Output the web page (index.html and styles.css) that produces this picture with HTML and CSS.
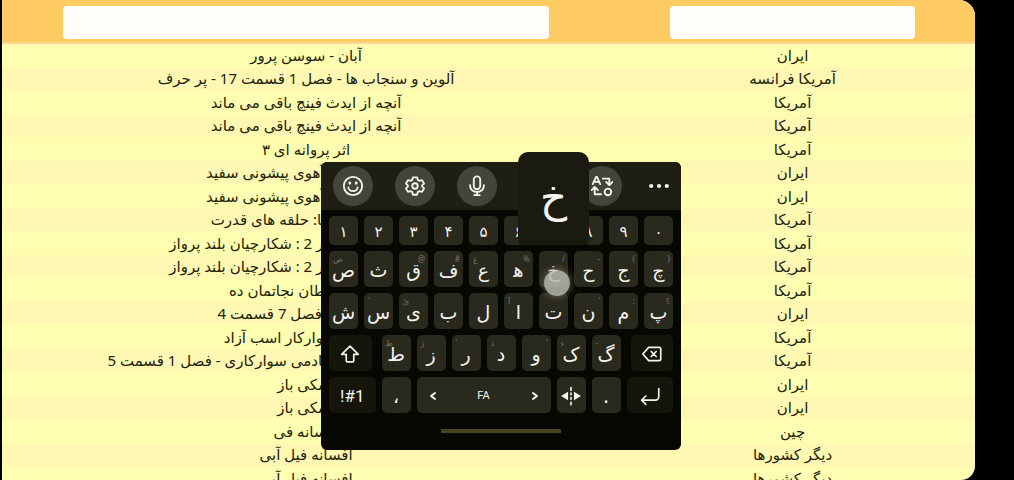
FILE: index.html
```html
<!DOCTYPE html>
<html lang="fa">
<head>
<meta charset="utf-8">
<meta name="viewport" content="width=device-width, initial-scale=1">
<title>فهرست فیلم ها</title>
<link rel="stylesheet" href="styles.css">
</head>
<body>
<main class="panel">
<table class="films" dir="rtl">
<colgroup><col class="col-country"><col class="col-title"></colgroup>
<thead>
<tr>
<th><input class="filter filter-country" type="text" aria-label="کشور"></th>
<th><input class="filter filter-title" type="text" aria-label="عنوان"></th>
</tr>
</thead>
<tbody>
<tr><td>ایران</td><td>آبان - سوسن پرور</td></tr>
<tr><td>آمریکا فرانسه</td><td>آلوین و سنجاب ها - فصل 1 قسمت 17 - پر حرف</td></tr>
<tr><td>آمریکا</td><td>آنچه از ایدث فینچ باقی می ماند</td></tr>
<tr><td>آمریکا</td><td>آنچه از ایدث فینچ باقی می ماند</td></tr>
<tr><td>آمریکا</td><td>اثر پروانه ای ۳</td></tr>
<tr><td>ایران</td><td>ماجراهای آن آهوی پیشونی سفید</td></tr>
<tr><td>ایران</td><td>ماجراهای آن آهوی پیشونی سفید</td></tr>
<tr><td>آمریکا</td><td>ارباب حلقه ها: حلقه های قدرت</td></tr>
<tr><td>آمریکا</td><td>ارتش پرندگان مهاجر 2 : شکارچیان بلند پرواز</td></tr>
<tr><td>آمریکا</td><td>ارتش پرندگان مهاجر 2 : شکارچیان بلند پرواز</td></tr>
<tr><td>آمریکا</td><td>از شر شیطان نجاتمان ده</td></tr>
<tr><td>ایران</td><td>سرنوشت - فصل 7 قسمت 4</td></tr>
<tr><td>آمریکا</td><td>اسپریت سوارکار اسب آزاد</td></tr>
<tr><td>آمریکا</td><td>اسب های وحشی و قهرمان آکادمی سوارکاری - فصل 1 قسمت 5</td></tr>
<tr><td>ایران</td><td>اسکی باز</td></tr>
<tr><td>ایران</td><td>اسکی باز</td></tr>
<tr><td>چین</td><td>افسانه فی</td></tr>
<tr><td>دیگر کشورها</td><td>افسانه فیل آبی</td></tr>
<tr><td>دیگر کشورها</td><td>افسانه فیل آبی</td></tr>
</tbody>
</table>
</main>

<section class="keyboard" aria-label="صفحه کلید">
<div class="toolbar">
<button class="tool" aria-label="شکلک"><svg viewBox="0 0 24 24"><circle cx="12" cy="12" r="10"/><path d="M7 13.500a5 4 0 0 0 10 0"/><path d="M8.500 8.500v.6M15.500 8.500v.6" class="heavy"/></svg></button>
<button class="tool" aria-label="تنظیمات"><svg viewBox="0 0 24 24"><path d="M9.800 2.500h4.400l.8 2.800 1.900 1.100 2.800-.8 2.200 3.800-2.100 2v1.200l2.100 2-2.200 3.800-2.800-.8-1.900 1.100-.8 2.800H9.800L9 18.700l-1.900-1.100-2.800.8-2.200-3.800 2.100-2v-1.200l-2.100-2 2.200-3.800 2.800.8L9 5.300z"/><circle cx="12" cy="12" r="3"/></svg></button>
<button class="tool" aria-label="گفتار"><svg viewBox="0 0 24 24"><rect x="8.500" y="1.500" width="7" height="14" rx="3.500"/><path d="M4.500 11v1a7.500 6.500 0 0 0 15 0v-1M12 18.500v3M9 22h6"/></svg></button>
<span class="tool-gap"></span>
<button class="tool" aria-label="ترجمه"><svg viewBox="0 0 24 24"><path d="M2 10l3.500-8h1L10 10M3.500 7.500h5M13 4h7v6M16.500 7.500L20 11l3.500-3.500M11 21H4v-7M.8 16.500L4 13l3.500 3.500"/><circle cx="18.500" cy="18.500" r="3.600"/></svg></button>
<button class="tool more" aria-label="بیشتر"><svg viewBox="0 0 24 24"><circle cx="3.500" cy="12" r="2.300"/><circle cx="12" cy="12" r="2.300"/><circle cx="20.500" cy="12" r="2.300"/></svg></button>
</div>
<div class="keys">
<div class="row digits">
<button class="key">۱</button><button class="key">۲</button><button class="key">۳</button><button class="key">۴</button><button class="key">۵</button><button class="key">۶</button><button class="key">۷</button><button class="key">۸</button><button class="key">۹</button><button class="key">۰</button>
</div>
<div class="row">
<button class="key"><small class="left">ض</small>ص</button><button class="key">ث</button><button class="key"><small>@</small>ق</button><button class="key"><small>#</small>ف</button><button class="key"><small class="left">غ</small>ع</button><button class="key"><small>%</small>ه&zwj;</button><button class="key"><small>/</small>خ<span class="touch"></span></button><button class="key"><small>-</small>ح</button><button class="key"><small>(</small>ج</button><button class="key"><small>)</small>چ</button>
</div>
<div class="row">
<button class="key">ش</button><button class="key"><small class="left">'</small>س</button><button class="key"><small class="left">ئ</small>ی</button><button class="key">ب</button><button class="key">ل</button><button class="key"><small class="left">آ</small>ا</button><button class="key">ت</button><button class="key"><small>'</small>ن</button><button class="key"><small>:</small>م</button><button class="key"><small>؟</small>پ</button>
</div>
<div class="row">
<button class="key fn shift" aria-label="شیفت"><svg viewBox="0 0 24 24"><path d="M12 2.500l10 10h-5.500V20a1.500 1.500 0 0 1-1.500 1.500H9A1.500 1.500 0 0 1 7.500 20v-7.500H2z"/></svg></button><button class="key"><small class="left">ظ</small>ط</button><button class="key"><small class="left">ژ</small>ز</button><button class="key"><small class="left">'</small>ر</button><button class="key"><small class="left">ذ</small>د</button><button class="key"><small>'</small>و</button><button class="key"><small class="left">ء</small>ک</button><button class="key"><small class="left">-</small>گ</button><button class="key fn erase" aria-label="پاک کردن"><svg viewBox="0 0 24 24"><path d="M8 4h12.500a2 2 0 0 1 2 2v12a2 2 0 0 1-2 2H8L1 12zM11 9l6 6M17 9l-6 6"/></svg></button>
</div>
<div class="row">
<button class="key fn symbols">!#1</button><button class="key">،</button><button class="key space"><svg viewBox="0 0 12 12"><path d="M8 3L4 6l4 3"/></svg><span>FA</span><svg viewBox="0 0 12 12"><path d="M4 3l4 3-4 3"/></svg></button><button class="key" aria-label="نیم فاصله"><svg viewBox="0 0 24 24"><path class="solid" d="M8.500 7v10L0 12zM15.500 7v10l8.500-5z"/><path d="M12 2v3M12 8.500v2M12 14v2M12 19.500v3"/></svg></button><button class="key">.</button><button class="key fn" aria-label="ورود"><svg viewBox="0 0 24 24"><path d="M22.500 3v10a4 4 0 0 1-4 4H2M7 12l-5 5 5 5"/></svg></button>
</div>
</div>
<div class="handle"></div>
<div class="popup">خ</div>
</section>
</body>
</html>
```
FILE: styles.css
```css
* {
  box-sizing: border-box;
}

body {
  margin: 0;
  height: 100vh;
  overflow: hidden;
  background: #000;
  font-family: "Noto Sans", Roboto, "DejaVu Sans", sans-serif;
}

.panel {
  height: 100vh;
  margin: 0 39px 0 2px;
  overflow: hidden;
  background: #ffffb2;
  border-radius: 0 16px 14px 0;
}

.films {
  width: 100%;
  table-layout: fixed;
  border-collapse: collapse;
  color: #25220c;
  font-size: 15px;
  line-height: 20px;
}

.col-country {
  width: 37.5%;
}

.films th {
  height: 43px;
  padding: 0;
  background: #ffcc64;
  border-bottom: 2px solid #ffd494;
}

.filter {
  display: block;
  height: 33px;
  margin: 2px auto 0;
  border: 0;
  border-radius: 4px;
  background: #fffefb;
}

.filter-country {
  width: 67%;
}

.filter-title {
  width: 80%;
}

.films td {
  height: 24px;
  padding: 0 0 1px;
  text-align: center;
  white-space: nowrap;
}

.films tr:nth-child(even) td {
  height: 23px;
  background: #fff8b2;
}

.keyboard {
  position: absolute;
  top: 162px;
  left: 321px;
  width: 360px;
  border-radius: 6px;
  background: #080803;
  color: #f4f4ee;
}

.toolbar {
  display: flex;
  justify-content: space-between;
  align-items: center;
  height: 48px;
  padding: 0 7px 0 12px;
  border-radius: 6px 6px 0 0;
  background: #1f1e13;
}

.tool {
  display: flex;
  justify-content: center;
  align-items: center;
  width: 40px;
  height: 40px;
  padding: 0;
  border: 0;
  border-radius: 50%;
  background: #45443a;
  color: inherit;
}

.tool-gap {
  width: 40px;
}

.more {
  width: 30px;
  background: none;
}

svg {
  width: 22px;
  height: 22px;
  fill: none;
  stroke: currentColor;
  stroke-width: 2;
  stroke-linecap: round;
  stroke-linejoin: round;
}

.heavy {
  stroke-width: 3;
}

.solid,
.more svg {
  fill: currentColor;
  stroke: none;
}

.keys {
  display: flex;
  flex-direction: column;
  gap: 6px;
  padding: 6px 8px 0;
}

.row {
  display: flex;
  gap: 6px;
  height: 36px;
}

.digits {
  height: 29px;
}

.key {
  position: relative;
  display: flex;
  justify-content: center;
  align-items: center;
  flex: 0 0 29px;
  padding: 2px 0 0;
  border: 0;
  border-radius: 5px;
  background: #2a291d;
  color: inherit;
  font-family: inherit;
  font-size: 19px;
  line-height: 24px;
}

.digits .key {
  padding: 0;
  font-size: 15px;
}

.key small {
  position: absolute;
  top: 2px;
  right: 3px;
  color: #77766b;
  font-size: 8px;
  line-height: 12px;
}

.key .left {
  right: auto;
  left: 4px;
}

.key svg {
  width: 20px;
  height: 20px;
}

.fn {
  flex: 1;
  background: #15150c;
}

.shift {
  margin-right: 4px;
}

.erase {
  margin-left: 4px;
}

.symbols {
  font-family: Roboto, sans-serif;
  font-size: 17px;
}

.key.space {
  flex: 0 0 134px;
  justify-content: space-between;
  padding: 2px 10px 0;
  font-family: Roboto, sans-serif;
  font-size: 11px;
}

.space svg {
  width: 12px;
  height: 12px;
}

.keyboard {
  padding-bottom: 17px;
}

.handle {
  width: 120px;
  height: 4px;
  margin: 16px auto 0;
  background: #45441f;
}

.popup {
  position: absolute;
  top: -10px;
  left: 197px;
  width: 71px;
  height: 93px;
  border-radius: 10px 10px 4px 4px;
  background: #1b1a10;
  font-size: 42px;
  line-height: 88px;
  text-align: center;
}

.touch {
  position: absolute;
  top: 19px;
  left: 5px;
  width: 26px;
  height: 26px;
  z-index: 1;
  border-radius: 50%;
  background: rgba(185, 185, 175, 0.85);
  box-shadow: 0 0 6px 2px rgba(150, 150, 130, 0.4);
}
```
